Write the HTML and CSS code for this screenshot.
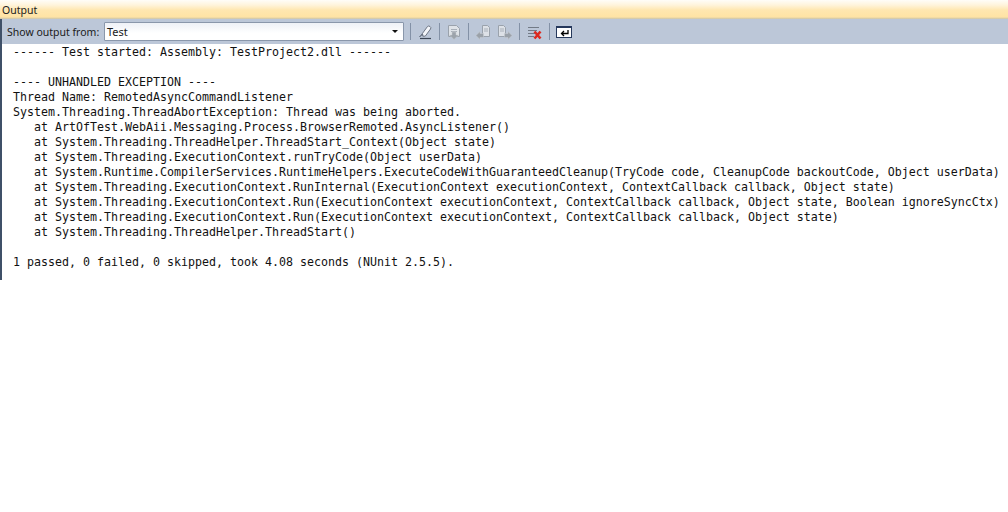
FILE: index.html
```html
<!DOCTYPE html>
<html lang="en">
<head>
<meta charset="utf-8">
<title>Output</title>
<link rel="stylesheet" href="styles.css">
</head>
<body>
<div class="panel">
  <div class="title">Output</div>
  <div class="toolbar">
    <span class="label">Show output from:</span>
    <div class="select"><span class="select-text">Test</span><span class="caret"></span></div>
    <span class="sep"></span>
    <svg class="icon" viewBox="0 0 16 16"><path d="M5 10 10.500 2.500q1-1 2.500 0t.5 2.500L8 12.500 5.500 12z" fill="#f4f6fa" stroke="#6e7684"/><path d="M5 10l3 2.500" stroke="#9aa3b2"/><path d="M3 14.500h11" stroke="#3c4656" stroke-width="1.200"/><path d="M2.500 13l3-3" stroke="#3c4656"/></svg>
    <span class="sep"></span>
    <svg class="icon" viewBox="0 0 16 16"><path d="M2.500 1.500h8l3 3v8h-11z" fill="#dfe3e8" stroke="#9aa2ac"/><path d="M5 5.500h6M5 7.500h6" stroke="#a9b0b9"/><path d="M6 8h4v3h2.500L8 15.500 3.500 11H6z" fill="#9ca3ab" stroke="#c9cdd2" stroke-width="0.500"/></svg>
    <span class="sep"></span>
    <svg class="icon" viewBox="0 0 16 16"><path d="M7.500 1.500h5l2 2v9h-7z" fill="#dde1e7" stroke="#9aa2ac"/><path d="M9 5h4M9 7h4" stroke="#a9b0b9"/><path d="M1 11.500l4-4v2h3.500v4H5v2z" fill="#9aa1a9" stroke="#c9cdd2" stroke-width="0.500"/></svg>
    <svg class="icon icon-tight" viewBox="0 0 16 16"><path d="M1.500 1.500h5l2 2v9h-7z" fill="#dde1e7" stroke="#9aa2ac"/><path d="M3 5h4M3 7h4" stroke="#a9b0b9"/><path d="M15 11.500l-4-4v2H7.500v4H11v2z" fill="#9aa1a9" stroke="#c9cdd2" stroke-width="0.500"/></svg>
    <span class="sep"></span>
    <svg class="icon icon-clear" viewBox="0 0 16 16"><path d="M1 3.500h11M1 6.500h9M1 9.500h7M1 12.500h6" stroke="#727a86"/><path d="M7.500 7.500l6 7M13.500 7.500l-6 7" stroke="#dc2a20" stroke-width="2.600"/></svg>
    <span class="sep"></span>
    <svg class="icon" viewBox="0 0 16 16"><rect x="0.500" y="2.500" width="15" height="11" fill="#fff" stroke="#26395c"/><rect x="0.500" y="2.500" width="15" height="1.500" fill="#26395c"/><path d="M12 6v3.500H5.500M8 7l-2.500 2.500L8 12" fill="none" stroke="#000" stroke-width="1.300"/></svg>
  </div>
  <pre class="output">------ Test started: Assembly: TestProject2.dll ------

---- UNHANDLED EXCEPTION ----
Thread Name: RemotedAsyncCommandListener
System.Threading.ThreadAbortException: Thread was being aborted.
   at ArtOfTest.WebAii.Messaging.Process.BrowserRemoted.AsyncListener()
   at System.Threading.ThreadHelper.ThreadStart_Context(Object state)
   at System.Threading.ExecutionContext.runTryCode(Object userData)
   at System.Runtime.CompilerServices.RuntimeHelpers.ExecuteCodeWithGuaranteedCleanup(TryCode code, CleanupCode backoutCode, Object userData)
   at System.Threading.ExecutionContext.RunInternal(ExecutionContext executionContext, ContextCallback callback, Object state)
   at System.Threading.ExecutionContext.Run(ExecutionContext executionContext, ContextCallback callback, Object state, Boolean ignoreSyncCtx)
   at System.Threading.ExecutionContext.Run(ExecutionContext executionContext, ContextCallback callback, Object state)
   at System.Threading.ThreadHelper.ThreadStart()

1 passed, 0 failed, 0 skipped, took 4.08 seconds (NUnit 2.5.5).
</pre>
</div>
</body>
</html>
```
FILE: styles.css
```css
html, body {
  margin: 0;
  padding: 0;
  background: #fff;
  overflow: hidden;
}
.panel {
  width: 1008px;
  height: 512px;
  font-family: "Noto Sans", "Liberation Sans", sans-serif;
  color: #1a1a1a;
}
.title {
  height: 19px;
  line-height: 20px;
  font-size: 10.5px;
  padding-left: 2px;
  box-sizing: border-box;
  background: linear-gradient(#fffdf8 0, #fff4dc 5px, #ffe7b0 10px, #ffe3a4 17px, #c9c4ac 19px);
}
.toolbar {
  height: 25px;
  box-sizing: border-box;
  display: flex;
  align-items: center;
  background: #bcc7d8;
  border-left: 2px solid #3f5068;
  padding-left: 5px;
}
.label {
  font-size: 10.5px;
  width: 97px;
  flex: none;
  white-space: nowrap;
}
.select {
  width: 300px;
  height: 19px;
  box-sizing: border-box;
  flex: none;
  display: flex;
  align-items: center;
  justify-content: space-between;
  background: linear-gradient(#eef1f7, #fff 60%);
  border: 1px solid #8a97ab;
  border-radius: 1px;
  padding: 0 5px 0 2px;
  font-size: 11px;
}
.caret {
  width: 0;
  height: 0;
  border-left: 3px solid transparent;
  border-right: 3px solid transparent;
  border-top: 3px solid #111;
}
.sep {
  width: 1px;
  height: 17px;
  background: #8391a6;
  margin: 0 6px;
  flex: none;
}
.icon {
  width: 16px;
  height: 16px;
  flex: none;
}
.icon-tight {
  margin-left: 6px;
}
.icon-clear {
  margin-left: 1px;
}
.output {
  margin: 0;
  height: 235px;
  width: 995px;
  padding: 1px 0 0 11px;
  border-left: 2px solid #3f5068;
  font-family: "DejaVu Sans Mono", monospace;
  font-size: 11.63px;
  line-height: 15px;
  color: #111;
  overflow: hidden;
}
```
